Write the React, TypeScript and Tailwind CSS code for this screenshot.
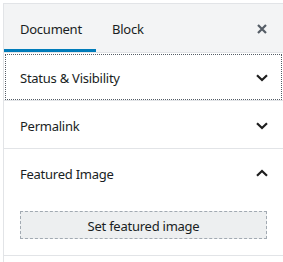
import React from "react";

function ChevronDown() {
  return (
    <svg width="12" height="8" viewBox="0 0 12 8" className="text-[#1e1e1e] block">
      <path d="M1 1.2L6 6L11 1.2" fill="none" stroke="currentColor" strokeWidth="2.2" />
    </svg>
  );
}
function ChevronUp() {
  return (
    <svg width="12" height="8" viewBox="0 0 12 8" className="text-[#1e1e1e] block">
      <path d="M1 6.8L6 2L11 6.8" fill="none" stroke="currentColor" strokeWidth="2.2" />
    </svg>
  );
}

export default function App() {
  return (
    <div className="w-[283px] h-[262px] bg-white pt-[3px] pl-[3px]" style={{ fontFamily: '"Noto Sans", "Open Sans", sans-serif' }}>
      <div className="border-l border-t border-[#e2e4e7] h-[259px] text-[13px] tracking-[-0.25px] text-[#191e23]">
        <div className="flex items-center h-[49px] bg-[#f3f4f5] border-b border-[#e2e4e7]">
          <div className="relative w-[92px] h-[48px] flex items-center pl-4">
            <span className="mt-[4px]">Document</span>
            <div className="absolute left-0 right-0 bottom-0 h-[3px] bg-[#007cba]" />
          </div>
          <div className="h-[48px] flex items-center pl-4">
            <span className="mt-[4px]">Block</span>
          </div>
          <div className="ml-auto mr-[16px] mt-[2px] flex items-center justify-center text-[#555d66]">
            <svg width="10" height="10" viewBox="0 0 10 10" className="block">
              <path d="M1 1L9 9M9 1L1 9" stroke="currentColor" strokeWidth="2.2" />
            </svg>
          </div>
        </div>
        <div className="h-[47px] flex items-center pl-4 pr-[15px] outline-1 outline-dotted outline-[#555d66] -outline-offset-2 border-b border-[#e2e4e7] box-content">
          <span className="mt-[4px]">Status &amp; Visibility</span>
          <span className="ml-auto mt-[3px]"><ChevronDown /></span>
        </div>
        <div className="h-[47px] flex items-center pl-4 pr-[15px] border-b border-[#e2e4e7] box-content">
          <span className="mt-[4px]">Permalink</span>
          <span className="ml-auto mt-[3px]"><ChevronDown /></span>
        </div>
        <div className="border-b border-[#e2e4e7]">
          <div className="h-[47px] flex items-center pl-4 pr-[15px]">
            <span className="mt-[4px]">Featured Image</span>
            <span className="ml-auto mt-[0px]"><ChevronUp /></span>
          </div>
          <div className="px-4 pt-[15px] pb-4">
            <div className="h-[28px] flex items-center justify-center bg-[#edeff0] border border-dashed border-[#a2aab2]">
              <span className="mt-[3px]">Set featured image</span>
            </div>
          </div>
        </div>
      </div>
    </div>
  );
}
